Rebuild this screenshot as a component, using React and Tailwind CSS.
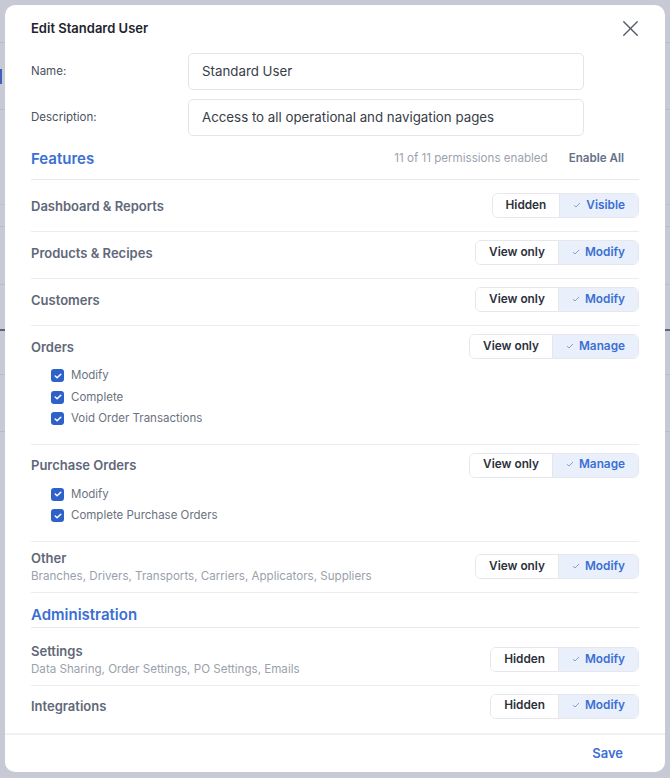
import { X } from "lucide-react";

const pageRows = [
  "h-[43px] border-b border-[#b8bbc9]",
  "h-[67px] border-b border-[#b8bbc9] flex items-center",
  "h-[95px] border-b border-[#c0c3ce]",
  "h-[22px] border-b border-[#b8bbc9]",
  "h-[58px] border-b border-[#b8bbc9]",
  "h-[46px] border-b-2 border-[#5a6488]",
  "h-[44px] border-b border-[#b8bbc9]",
  "h-[57px] border-b border-[#b8bbc9]",
];

const features = [
  { name: "Dashboard & Reports", off: "Hidden", on: "Visible" },
  { name: "Products & Recipes", off: "View only", on: "Modify" },
  { name: "Customers", off: "View only", on: "Modify" },
  {
    name: "Orders",
    off: "View only",
    on: "Manage",
    checks: ["Modify", "Complete", "Void Order Transactions"],
  },
  {
    name: "Purchase Orders",
    off: "View only",
    on: "Manage",
    checks: ["Modify", "Complete Purchase Orders"],
  },
  {
    name: "Other",
    sub: "Branches, Drivers, Transports, Carriers, Applicators, Suppliers",
    off: "View only",
    on: "Modify",
  },
];

const admin = [
  {
    name: "Settings",
    sub: "Data Sharing, Order Settings, PO Settings, Emails",
    off: "Hidden",
    on: "Modify",
  },
  { name: "Integrations", off: "Hidden", on: "Modify" },
];

function Toggle({ off, on }) {
  return (
    <div className="flex h-[25px] overflow-hidden rounded-[6px] border border-[#e5e7ec] text-[11.8px] font-semibold">
      <span className="flex items-center bg-white px-[13px] text-[#2c313b]">
        {off}
      </span>
      <span className="flex items-center gap-[5px] border-l border-[#e5e7ec] bg-[#e9f0fc] px-[13px] text-[#3b6fd2]">
        <svg width="8" height="6" viewBox="0 0 8 6" className="-mt-[2px]">
          <path
            d="M1 3.2 L3 5 L7 1"
            fill="none"
            stroke="#7fa2dd"
            strokeWidth="1"
          />
        </svg>
        {on}
      </span>
    </div>
  );
}

function Check({ label }) {
  return (
    <div className="flex h-[21.5px] items-center gap-[7px]">
      <span className="flex h-[13px] w-[13px] items-center justify-center rounded-[3px] bg-[#2f62c8]">
        <svg width="8" height="6" viewBox="0 0 8 6">
          <path
            d="M1.2 3 L3.1 4.8 L6.8 1.2"
            fill="none"
            stroke="white"
            strokeWidth="1.5"
            strokeLinecap="round"
            strokeLinejoin="round"
          />
        </svg>
      </span>
      <span className="text-[11.5px] text-[#6b7280]">{label}</span>
    </div>
  );
}

function Row({ item, last }) {
  // rows with a sub line sit tighter than plain ones
  const pad = item.sub ? "pt-[7px] pb-[7px]" : "pt-[8px] pb-[13px]";
  const line = last ? "" : "border-b border-[#ebecef]";
  return (
    <div className={`${line} ${pad}`}>
      <div className="flex items-center justify-between">
        <div>
          <div className="text-[13px] font-semibold leading-[18px] text-[#5f6879]">
            {item.name}
          </div>
          {item.sub && (
            <div className="text-[11.6px] leading-[18px] text-[#9aa1ac]">
              {item.sub}
            </div>
          )}
        </div>
        <Toggle off={item.off} on={item.on} />
      </div>
      {item.checks && (
        <div className="mt-[6px] pl-[20px] pb-[1px]">
          {item.checks.map((c) => (
            <Check key={c} label={c} />
          ))}
        </div>
      )}
    </div>
  );
}

export default function App() {
  return (
    <div
      className="relative h-[778px] w-[670px] overflow-hidden bg-[#c7c9d4]"
      style={{ fontFamily: "Inter, 'Noto Sans', sans-serif" }}
    >
      {/* page behind the overlay */}
      <div className="flex flex-col">
        {pageRows.map((cls, i) => (
          <div key={i} className={cls}>
            {i === 1 && <span className="h-[15px] w-[2px] bg-[#3f5fb8]" />}
          </div>
        ))}
      </div>

      {/* modal */}
      <div className="absolute left-[5px] top-[5px] flex h-[767px] w-[660px] flex-col rounded-[10px] bg-white">
        <div className="flex h-[33px] items-end justify-between pl-[26px] pr-[21px]">
          <h2 className="text-[13px] font-semibold leading-[20px] text-[#1f2430]">
            Edit Standard User
          </h2>
          <X
            size={27}
            strokeWidth={1.25}
            className="-mb-[4px] text-[#545a66]"
          />
        </div>

        <div className="flex-1 px-[26px]">
          <div className="mt-[15px] flex flex-col gap-[9px]">
            <div className="flex items-center">
              <label className="w-[157px] text-[11.5px] text-[#4b5261]">
                Name:
              </label>
              <div className="flex h-[37px] w-[396px] items-center rounded-[5px] border border-[#e3e5ea] px-[13px] text-[13.3px] text-[#383d47]">
                Standard User
              </div>
            </div>
            <div className="flex items-center">
              <label className="w-[157px] text-[11.5px] text-[#4b5261]">
                Description:
              </label>
              <div className="flex h-[37px] w-[396px] items-center rounded-[5px] border border-[#e3e5ea] px-[13px] text-[13.3px] text-[#383d47]">
                Access to all operational and navigation pages
              </div>
            </div>
          </div>

          {/* Features */}
          <div className="flex items-center justify-between border-b border-[#e6e7eb] pb-[10px] pt-[13px]">
            <h3 className="text-[15px] font-semibold leading-[20px] text-[#3a6fd3]">
              Features
            </h3>
            <div className="flex items-center gap-[6px] text-[11.6px]">
              <span className="text-[#9ca3af]">11 of 11 permissions enabled</span>
              <button className="px-[15px] font-semibold text-[#667086]">
                Enable All
              </button>
            </div>
          </div>
          <div className="mt-[5px]">
            {features.map((f) => (
              <Row key={f.name} item={f} />
            ))}
          </div>

          {/* Administration */}
          <div className="border-b border-[#e6e7eb] pb-[2px] pt-[12px]">
            <h3 className="text-[15px] font-semibold leading-[20px] text-[#3a6fd3]">
              Administration
            </h3>
          </div>
          <div className="mt-[7px]">
            {admin.map((f, i) => (
              <Row key={f.name} item={f} last={i === admin.length - 1} />
            ))}
          </div>
        </div>

        <div className="flex h-[39px] items-center justify-end border-t-2 border-[#f0f1f3] pr-[27px]">
          <button className="px-[15px] text-[13px] font-semibold text-[#3b70d4]">
            Save
          </button>
        </div>
      </div>
    </div>
  );
}
